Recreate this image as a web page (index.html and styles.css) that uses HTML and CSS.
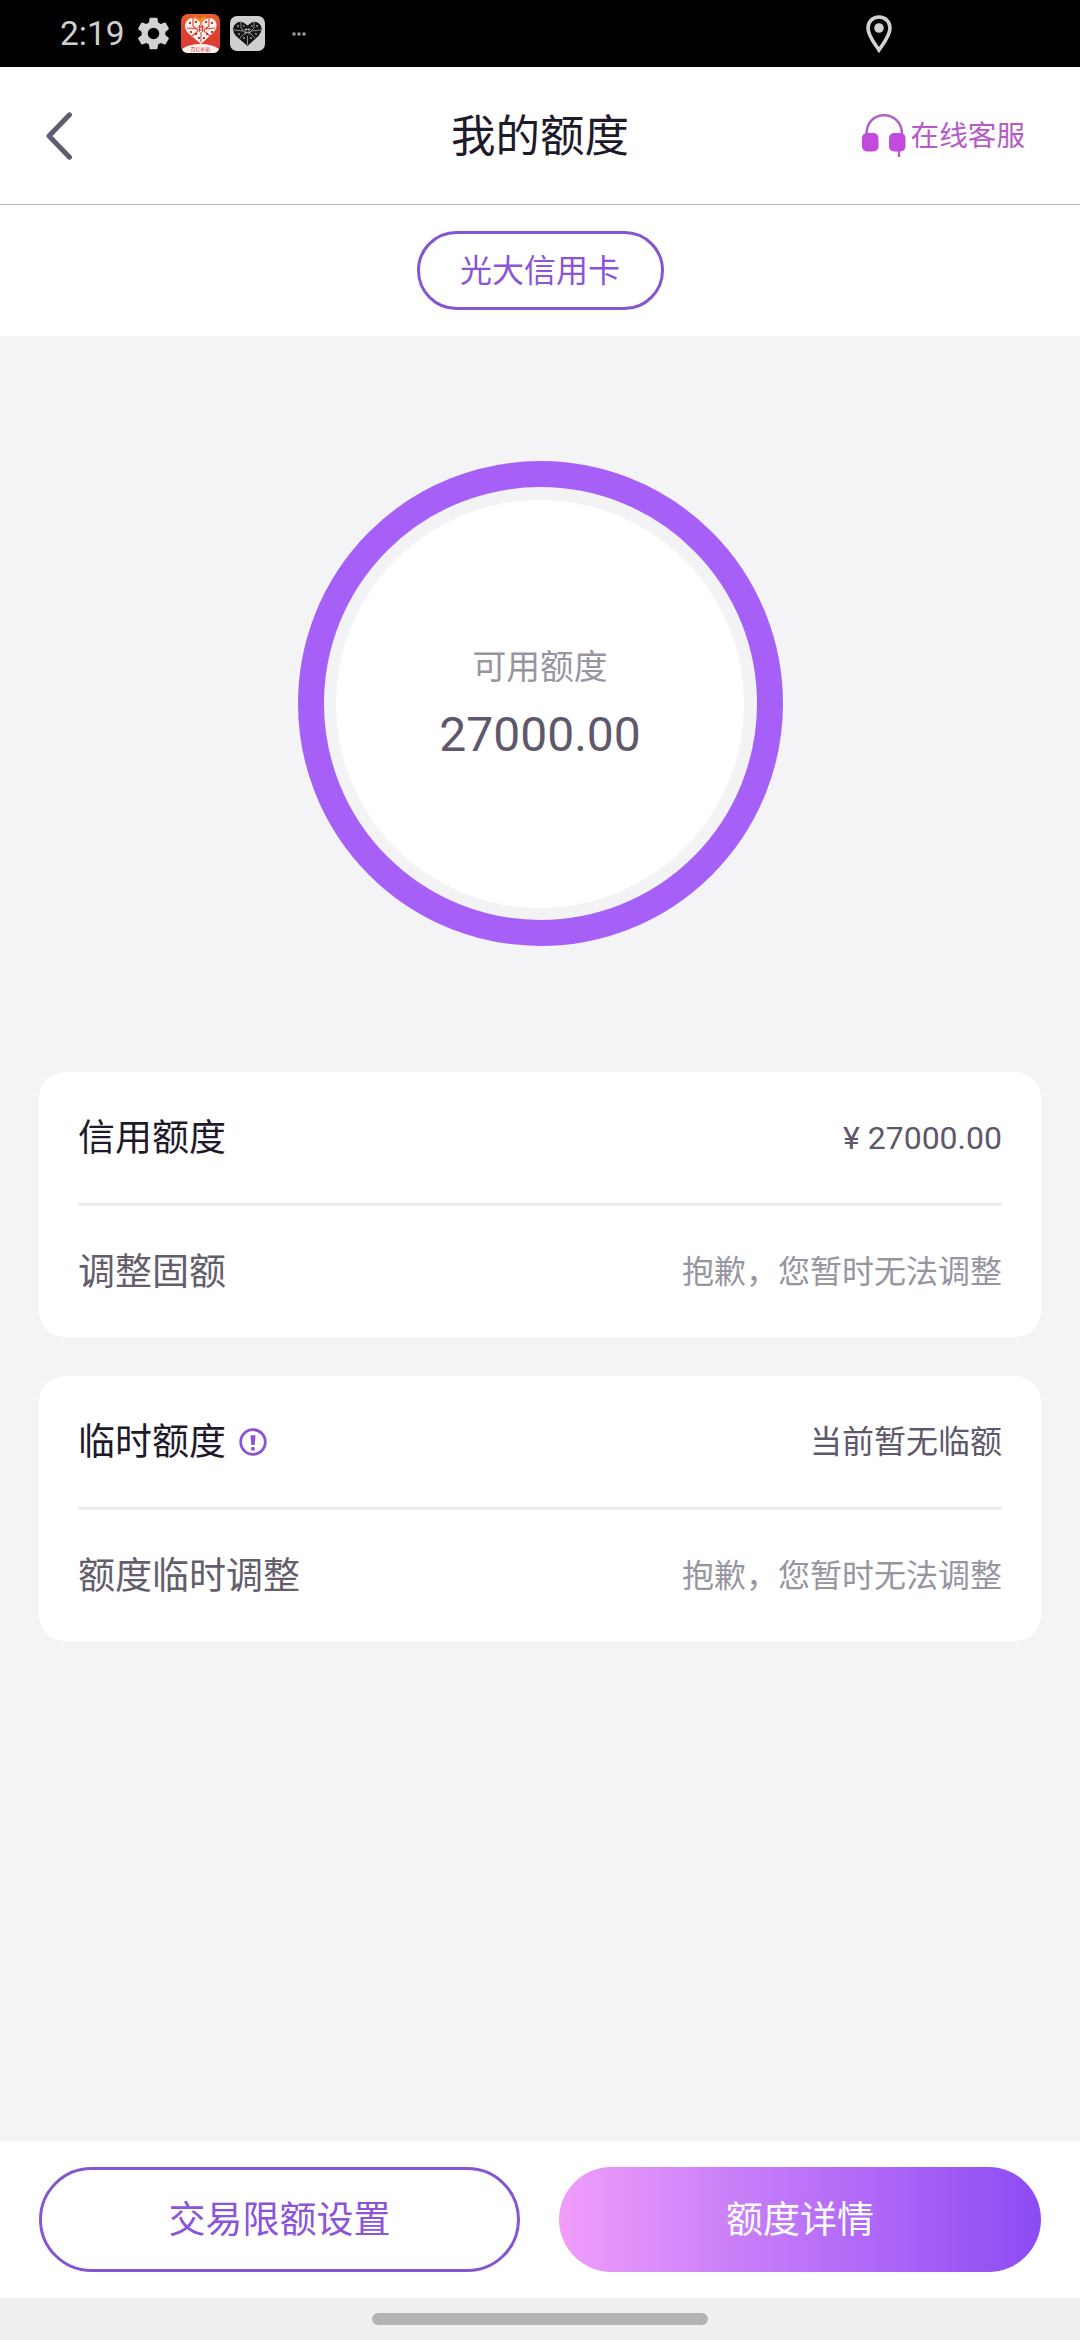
FILE: index.html
```html
<!DOCTYPE html>
<html lang="zh-CN">
<head>
<meta charset="UTF-8">
<title>我的额度</title>
<link rel="stylesheet" href="styles.css">
</head>
<body>
<div class="screen">
  <div class="status">
    <span class="time">2:19</span>
    <svg class="gear" viewBox="2 2 20 20"><path fill="#d2d2d2" d="M19.14 12.94c.04-.3.06-.61.06-.94s-.02-.64-.07-.94l2.03-1.58a.49.49 0 0 0 .12-.61l-1.92-3.32a.49.49 0 0 0-.59-.22l-2.39.96c-.5-.38-1.03-.7-1.62-.94l-.36-2.54a.48.48 0 0 0-.48-.41h-3.84a.48.48 0 0 0-.47.41l-.36 2.54c-.59.24-1.13.57-1.62.94l-2.39-.96a.49.49 0 0 0-.59.22L2.74 8.87c-.12.21-.08.47.12.61l2.03 1.58c-.05.3-.09.63-.09.94s.02.64.07.94l-2.03 1.58a.49.49 0 0 0-.12.61l1.92 3.32c.12.22.37.29.59.22l2.39-.96c.5.38 1.03.7 1.62.94l.36 2.54c.05.24.24.41.48.41h3.84c.24 0 .44-.17.47-.41l.36-2.54c.59-.24 1.13-.56 1.62-.94l2.39.96c.22.08.47 0 .59-.22l1.92-3.32a.49.49 0 0 0-.12-.61zM12 15.500a3.500 3.500 0 1 1 0-7 3.500 3.500 0 0 1 0 7z"/></svg>
    <div class="app app-red">
      <svg viewBox="0 0 39 39">
        <defs>
          <linearGradient id="fire" x1="0" y1="0" x2="0" y2="1"><stop offset="0" stop-color="#e8652c"/><stop offset=".3" stop-color="#e0452f"/><stop offset="1" stop-color="#d93a35"/></linearGradient>
        </defs>
        <rect width="39" height="39" rx="7" fill="url(#fire)"/>
        <path d="M14 2l5 3 5-3 2 5-7 4-7-4z" fill="#f08c2c"/>
        <path d="M20 30L7 19Q2 13 5 8q4-6 10-3l5 4 5-4q6-3 10 3 2 6-3 11z" fill="#fff0ec"/>
        <path d="M20 8v6M20 18v10M12 4v8l5 4M28 4v8l-5 4M6 14l10 1M34 14l-10 1M11 22l6-5M29 22l-6-5" stroke="#d9473c" stroke-width="1.1" fill="none"/>
        <path d="M16.500 13h7M16.500 16h7M18.500 11v7M21.500 11v7" stroke="#d9473c" stroke-width="1"/>
        <path d="M8 9h2M14 8h2M24 8h2M30 9h2M9 18h2M14 20h2M25 20h2M30 18h2M17 24h2M22 24h2" stroke="#b53a32" stroke-width="2"/>
        <path d="M1 35Q8 30 19.500 30T38 35q-1.500 4-6 4H7q-4.500 0-6-4z" fill="#fff1ee"/>
      </svg>
      <span class="app-label">百亿补贴</span>
    </div>
    <svg class="app-grey" viewBox="0 0 35 35">
      <rect width="35" height="35" rx="7" fill="#cfcfcf"/>
      <path d="M17.500 30L6 20Q1 14 4.500 9q4-5 9-2.500l4 3 4-3q5-2.500 9 2.500 3 5-2 11z" fill="#161616"/>
      <path d="M11 6v6l4 4M24 6v6l-4 4M4 14l10 1M31 14l-10 1M10 22l5-5M25 22l-5-5M17.500 20v9" stroke="#aaa" stroke-width=".8" fill="none"/>
      <path d="M14.500 13.500h6M14.500 16.500h6M16 12v6.500M19 12v6.500" stroke="#bbb" stroke-width=".8"/>
      <path d="M7 10h2M13 10h1.500M21 10h1.500M26 10h2M8 18h2M13 22h2M20 22h2M25 18h2" stroke="#999" stroke-width="1.500"/>
    </svg>
    <svg class="more" viewBox="0 0 14 4"><path d="M.5.500h3v3h-3zM5.500.500h3v3h-3zM10.500.500h3v3h-3z" fill="#a2a2a2"/></svg>
    <svg class="pin" viewBox="0 0 26 38"><path d="M13 2C6.500 2 2 6.800 2 13c0 8 7 16 11 22 4-6 11-14 11-22 0-6.200-4.500-11-11-11z" fill="none" stroke="#d2d2d2" stroke-width="3.600"/><circle cx="13" cy="13" r="4.800" fill="#d2d2d2"/></svg>
  </div>

  <header class="header">
    <svg class="back" viewBox="0 0 28 48"><path d="M23.500 2.800L3 24l20.500 21.200" fill="none" stroke="#635b70" stroke-width="5" stroke-linecap="round" stroke-linejoin="round"/></svg>
    <h1 class="title">我的额度</h1>
    <div class="service">
      <svg class="headset" viewBox="0 0 44 43">
        <path d="M4.500 20C4.500 9 12 1.200 22 1.200S40 9 40 20M37 36v7" fill="none" stroke="#b063c4" stroke-width="2.500"/>
        <rect x="0" y="19" width="16.500" height="18.500" rx="5" fill="#c24bdc"/>
        <rect x="27" y="19" width="16.500" height="18.500" rx="5" fill="#c24bdc"/>
      </svg>
      <span>在线客服</span>
    </div>
  </header>

  <nav class="tabs"><div class="tab">光大信用卡</div></nav>

  <main class="main">
    <section class="ring">
      <div class="disc">
        <div class="disc-label">可用额度</div>
        <div class="disc-value">27000.00</div>
      </div>
    </section>
    <section class="card">
      <div class="row"><span class="name">信用额度</span><span class="value">¥ 27000.00</span></div>
      <div class="row"><span class="name sub">调整固额</span><span class="value muted">抱歉，您暂时无法调整</span></div>
    </section>
    <section class="card">
      <div class="row"><span class="name">临时额度</span>
        <svg class="info" viewBox="0 0 28 28"><circle cx="14" cy="14" r="12.300" fill="none" stroke="#8b54d6" stroke-width="2.800"/><path d="M11.500 7.200h5l-.8 9.800h-3.400z" fill="#8b54d6"/><circle cx="14" cy="20.800" r="2" fill="#8b54d6"/></svg>
        <span class="value">当前暂无临额</span></div>
      <div class="row"><span class="name sub">额度临时调整</span><span class="value muted">抱歉，您暂时无法调整</span></div>
    </section>
  </main>

  <footer class="actions">
    <div class="button outline">交易限额设置</div>
    <div class="button filled">额度详情</div>
  </footer>
  <div class="gesture"><div class="handle"></div></div>
</div>
</body>
</html>
```
FILE: styles.css
```css
* { box-sizing: border-box; }
body {
  margin: 0;
  font-family: Roboto, "Noto Sans CJK SC", sans-serif;
  color: #1f1a2b;
}
svg { display: block; flex: none; }
.screen {
  width: 1080px;
  height: 2340px;
  display: flex;
  flex-direction: column;
  background: #f4f4f6;
  overflow: hidden;
}
.status {
  height: 67px;
  background: #000;
  display: flex;
  align-items: center;
  padding: 0 188px 0 60px;
}
.time { font-size: 33.5px; line-height: 40px; color: #cfcfcf; width: 77px; padding-top: 1px; }
.gear { width: 33px; height: 33px; }
.app { display: grid; width: 39px; height: 39px; margin-left: 11px; }
.app > * { grid-area: 1 / 1; }
.app-label {
  align-self: end;
  justify-self: center;
  font-size: 5px;
  line-height: 7px;
  color: #c84040;
  white-space: nowrap;
}
.app-grey { width: 35px; height: 35px; margin-left: 10px; }
.more { width: 14px; height: 4px; margin-left: 27px; }
.pin { width: 26px; height: 38px; margin-left: auto; }
.header {
  height: 138px;
  background: #fff;
  border-bottom: 1px solid #bababa;
  display: grid;
  grid-template-columns: 1fr auto 1fr;
  align-items: center;
  padding: 0 55px 0 46px;
}
.back { width: 28px; height: 48px; }
.title { margin: 0 0 0 9px; padding-top: 2px; font-size: 44.5px; line-height: 60px; font-weight: 400; }
.service {
  justify-self: end;
  display: flex;
  align-items: center;
  gap: 5px;
  font-size: 28.6px;
  line-height: 40px;
  color: #b65bc9;
}
.service span { padding-top: 1px; }
.headset { width: 44px; height: 43px; }
.tabs {
  height: 131px;
  background: #fff;
  display: flex;
  align-items: center;
  justify-content: center;
}
.tab {
  width: 247px;
  height: 79px;
  border: 3px solid #8555d2;
  border-radius: 40px;
  color: #8b54d9;
  font-size: 32px;
  line-height: 75px;
  text-align: center;
}
.main {
  flex: 1;
  display: flex;
  flex-direction: column;
  align-items: center;
  padding: 125px 39px 0;
}
.ring {
  width: 485px;
  height: 485px;
  border: 26.5px solid #a660f7;
  border-radius: 50%;
  background: #f3f3f5;
  display: flex;
  align-items: center;
  justify-content: center;
  margin-bottom: 126px;
}
.disc {
  width: 408px;
  height: 408px;
  border-radius: 50%;
  background: #fff;
  text-align: center;
  padding-top: 144px;
}
.disc-label { font-size: 33.8px; line-height: 48px; color: #9796a0; }
.disc-value { font-size: 48px; line-height: 60px; color: #5f586c; margin-top: 13px; }
.card {
  width: 1002px;
  height: 265px;
  background: #fff;
  border-radius: 26px;
  padding: 0 39px;
  margin-bottom: 39px;
}
.row { height: 131px; display: flex; align-items: center; }
.row + .row { height: 134px; border-top: 3px solid #ececed; }
.name { font-size: 37px; line-height: 54px; padding-top: 3px; }
.sub { color: #635d6c; }
.info { width: 28px; height: 28px; margin-left: 13px; }
.value { margin-left: auto; font-size: 32px; line-height: 46px; padding-top: 1px; color: #5f586c; }
.value.muted { color: #9796a0; }
.actions {
  height: 157px;
  background: #fff;
  display: grid;
  grid-template-columns: 481px 482px;
  gap: 39px;
  padding: 26px 39px;
}
.button {
  height: 105px;
  border-radius: 53px;
  font-size: 37px;
  line-height: 107px;
  text-align: center;
}
.outline { border: 3px solid #8555d2; color: #8b54d9; line-height: 101px; }
.filled {
  color: #fff;
  background: linear-gradient(90deg, #f09dfa 0%, #c67cf9 40%, #a962f7 72%, #8c4bf2 100%);
}
.gesture {
  height: 42px;
  background: #efefef;
  display: flex;
  justify-content: center;
  padding-top: 15px;
}
.handle { width: 336px; height: 12px; border-radius: 6px; background: #b3b3b3; }
```
